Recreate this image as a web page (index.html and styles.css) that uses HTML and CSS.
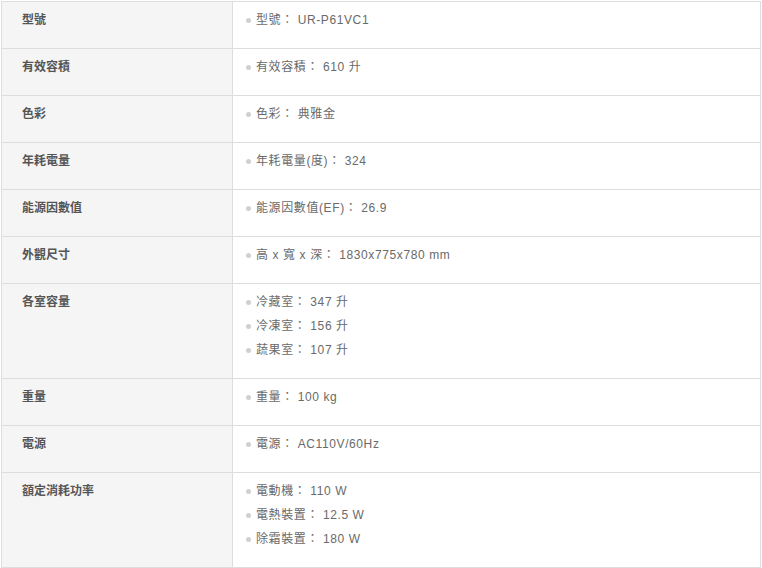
FILE: index.html
```html
<!DOCTYPE html>
<html lang="zh-Hant">
<head>
<meta charset="utf-8">
<link rel="stylesheet" href="styles.css">
</head>
<body>
<table class="spec">
  <tr><th>型號</th><td><ul><li>型號： UR-P61VC1</li></ul></td></tr>
  <tr><th>有效容積</th><td><ul><li>有效容積： 610 升</li></ul></td></tr>
  <tr><th>色彩</th><td><ul><li>色彩： 典雅金</li></ul></td></tr>
  <tr><th>年耗電量</th><td><ul><li>年耗電量(度)： 324</li></ul></td></tr>
  <tr><th>能源因數值</th><td><ul><li>能源因數值(EF)： 26.9</li></ul></td></tr>
  <tr><th>外觀尺寸</th><td><ul><li>高 x 寬 x 深： 1830x775x780 mm</li></ul></td></tr>
  <tr><th>各室容量</th><td><ul><li>冷藏室： 347 升</li><li>冷凍室： 156 升</li><li>蔬果室： 107 升</li></ul></td></tr>
  <tr><th>重量</th><td><ul><li>重量： 100 kg</li></ul></td></tr>
  <tr><th>電源</th><td><ul><li>電源： AC110V/60Hz</li></ul></td></tr>
  <tr><th>額定消耗功率</th><td><ul><li>電動機： 110 W</li><li>電熱裝置： 12.5 W</li><li>除霜裝置： 180 W</li></ul></td></tr>
</table>
</body>
</html>
```
FILE: styles.css
```css
html, body {
  margin: 0;
  padding: 0;
  background: #fff;
}
body {
  padding: 1px;
  font-family: "Liberation Sans", Arial, "Noto Sans CJK TC", sans-serif;
  font-size: 12px;
}
.spec {
  width: 760px;
  border-collapse: collapse;
  table-layout: fixed;
}
.spec th,
.spec td {
  border: 1px solid #dddddd;
  vertical-align: top;
  padding: 6px 0 16px;
  line-height: 24px;
  text-align: left;
}
.spec th {
  width: 210px;
  padding-left: 20px;
  background: #f5f5f5;
  color: #555;
  font-weight: bold;
}
.spec td {
  padding-left: 13px;
  color: #6a6a6a;
  letter-spacing: 0.6px;
}
.spec ul {
  list-style: none;
  margin: 0;
  padding: 0;
}
.spec li {
  display: flex;
  align-items: center;
}
.spec li::before {
  content: "";
  width: 5px;
  height: 5px;
  border-radius: 50%;
  background: #d0d0d0;
  margin-right: 5px;
  flex: none;
}
```
